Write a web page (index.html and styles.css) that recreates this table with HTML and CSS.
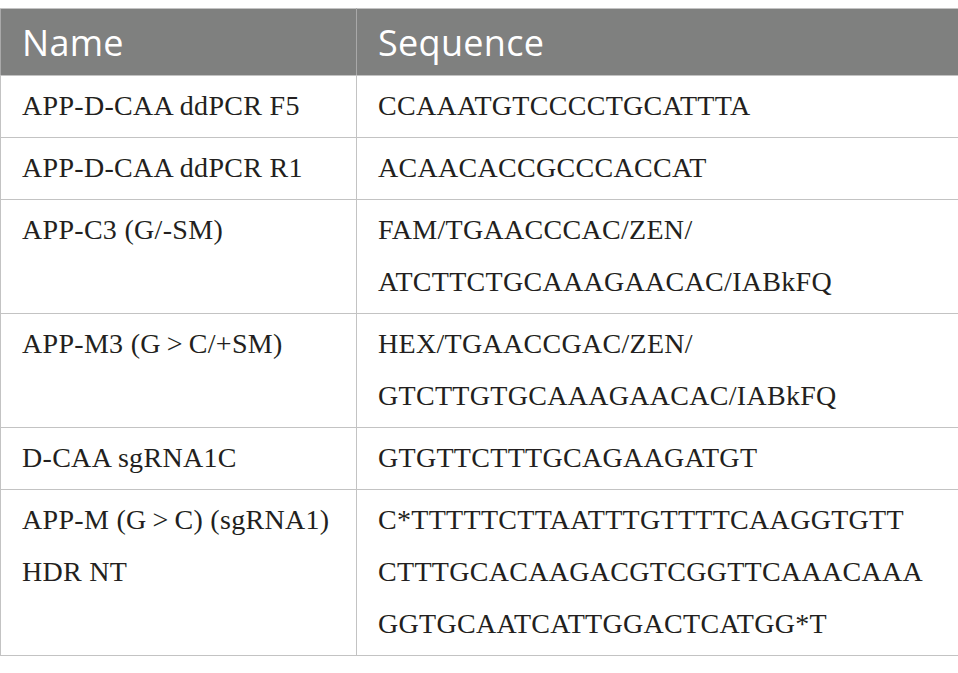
FILE: index.html
```html
<!DOCTYPE html>
<html>
<head>
<meta charset="utf-8">
<link rel="stylesheet" href="styles.css">
</head>
<body>
<table class="tbl">
  <colgroup><col class="c-name"><col class="c-seq"></colgroup>
  <thead>
    <tr><th>Name</th><th>Sequence</th></tr>
  </thead>
  <tbody>
    <tr><td>APP-D-CAA ddPCR F5</td><td>CCAAATGTCCCCTGCATTTA</td></tr>
    <tr><td>APP-D-CAA ddPCR R1</td><td>ACAACACCGCCCACCAT</td></tr>
    <tr><td>APP-C3 (G/-SM)</td><td>FAM/TGAACCCAC/ZEN/<br>ATCTTCTGCAAAGAACAC/IABkFQ</td></tr>
    <tr><td>APP-M3 (G&#8201;&gt;&#8201;C/+SM)</td><td>HEX/TGAACCGAC/ZEN/<br>GTCTTGTGCAAAGAACAC/IABkFQ</td></tr>
    <tr><td>D-CAA sgRNA1C</td><td>GTGTTCTTTGCAGAAGATGT</td></tr>
    <tr><td>APP-M (G&#8201;&gt;&#8201;C) (sgRNA1)<br>HDR NT</td><td>C*TTTTTCTTAATTTGTTTTCAAGGTGTT<br>CTTTGCACAAGACGTCGGTTCAAACAAA<br>GGTGCAATCATTGGACTCATGG*T</td></tr>
  </tbody>
</table>
</body>
</html>
```
FILE: styles.css
```css
html, body {
  margin: 0;
  background: #ffffff;
}
body {
  padding-top: 8px;
}
.tbl {
  border-collapse: collapse;
  table-layout: fixed;
  width: 958px;
}
.c-name { width: 356px; }
.c-seq { width: 602px; }
.tbl th,
.tbl td {
  border: 1px solid #c3c3c3;
  text-align: left;
  padding: 0 0 0 21px;
}
.tbl th {
  background: #7f807f;
  color: #ffffff;
  font-family: "Open Sans", "DejaVu Sans", sans-serif;
  font-weight: 400;
  font-size: 36px;
  letter-spacing: 0.3px;
  height: 66px;
  vertical-align: middle;
  border-color: #c3c3c3 #a9a9a9;
}
.tbl td {
  font-family: "Liberation Serif", "Times New Roman", serif;
  font-size: 28px;
  letter-spacing: 0.3px;
  line-height: 52px;
  color: #231f20;
  vertical-align: top;
  padding-top: 4px;
  padding-bottom: 5px;
}
```
